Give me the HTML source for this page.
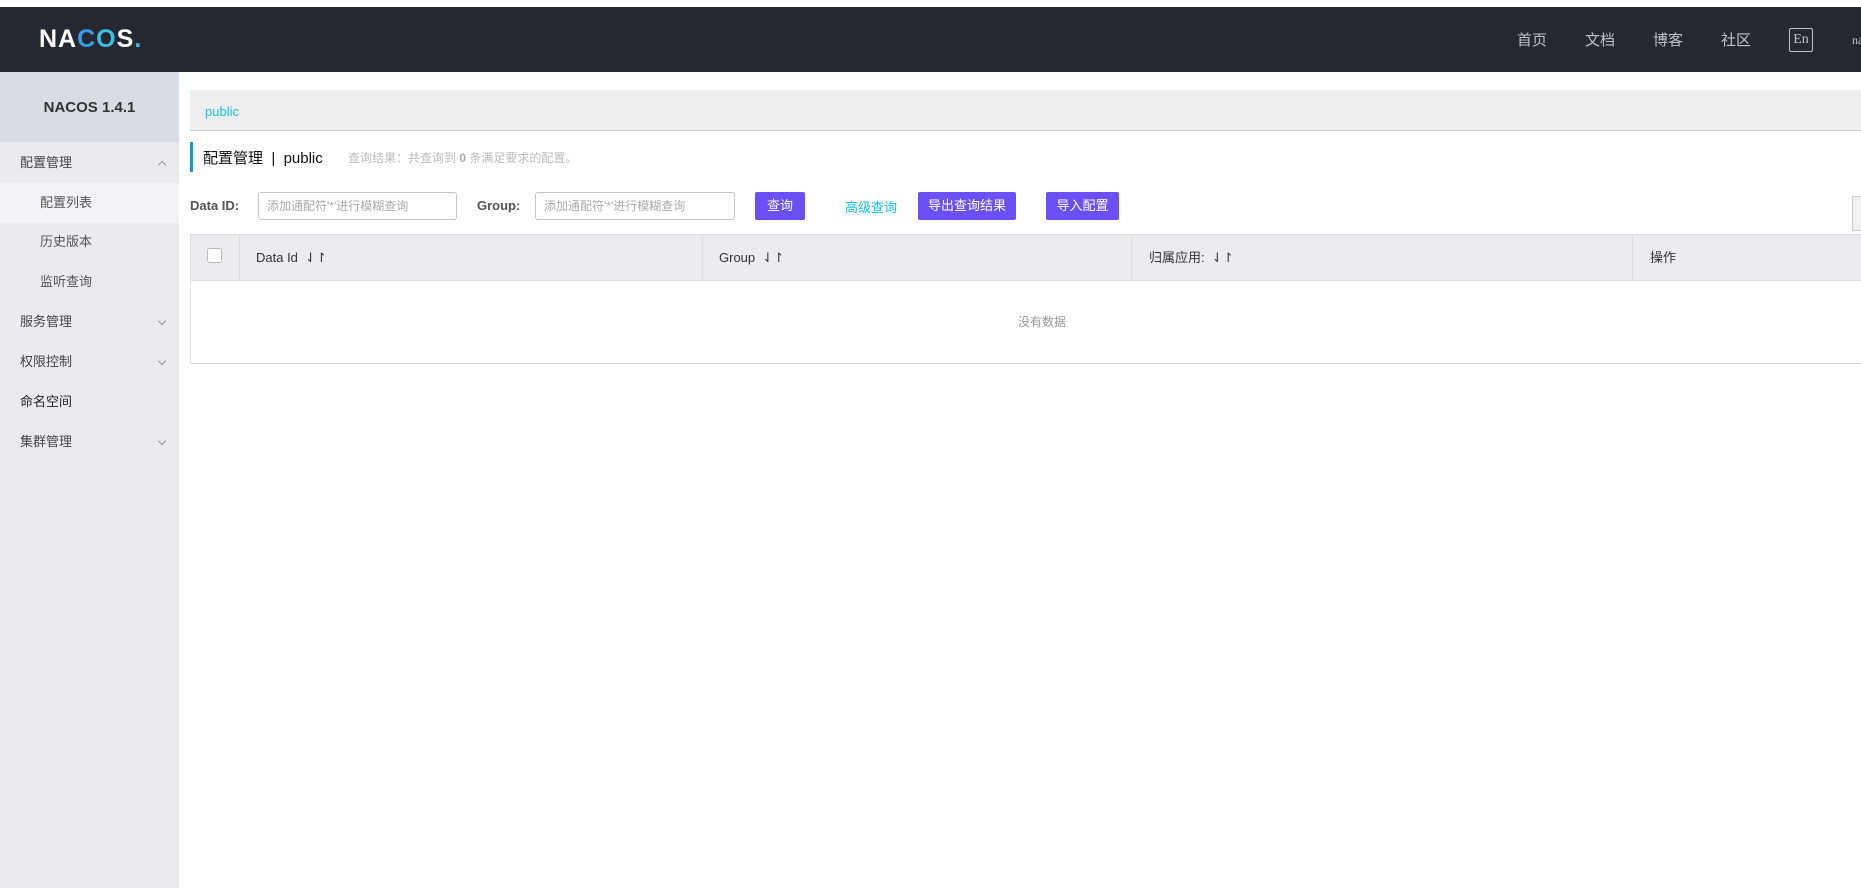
<!DOCTYPE html>
<html><head><meta charset="utf-8"><style>
*{margin:0;padding:0;box-sizing:border-box}
body{width:1861px;height:888px;overflow:hidden;background:#fff;font-family:"Liberation Sans","Noto Sans CJK SC",sans-serif;position:relative;color:#333}
.a{position:absolute;white-space:nowrap}
#hd{left:0;top:7px;width:1861px;height:65px;background:#252830}
.nav{color:#bfc3c9;font-size:15px;top:29px}
#sb{left:0;top:72px;width:179px;height:816px;background:#eaebef}
.mi{left:0;width:179px;height:40px;line-height:40px;font-size:13px;color:#444;padding-left:20px}
.sub{padding-left:40px;color:#555}
.chev{right:14px;top:16px;width:6px;height:6px;border-right:1px solid #999;border-bottom:1px solid #999;transform:rotate(45deg)}
.btn{height:28px;line-height:28px;background:#6c4ff6;color:#fff;font-size:13px;text-align:center;border-radius:2px;top:192px}
.inp{height:28px;border:1px solid #c4c6cf;border-radius:3px;font-size:12px;color:#aaa;line-height:26px;padding-left:8px;top:192px}
.lbl{font-size:13px;font-weight:bold;color:#555;top:198px}
.th{top:234px;height:47px;line-height:47px;font-size:13px;color:#333;border-right:1px solid #dcdee3}
</style></head><body>
<div class="a" id="hd"></div>
<div class="a" style="left:39px;top:25px;font-size:25px;font-weight:bold;color:#fff;letter-spacing:1px">NA<span style="color:#3a9ce6">C</span><span style="color:#3ac0e6">O</span>S<span style="color:#3ac0e6">.</span></div>
<div class="a nav" style="left:1517px">首页</div>
<div class="a nav" style="left:1585px">文档</div>
<div class="a nav" style="left:1653px">博客</div>
<div class="a nav" style="left:1721px">社区</div>
<div class="a" style="left:1789px;top:28px;width:24px;height:24px;border:1px solid #bfc3c9;border-radius:2px;color:#bfc3c9;font-family:'Liberation Serif',serif;font-size:14px;text-align:center;line-height:22px">En</div>
<div class="a" style="left:1852px;top:33px;color:#bfc3c9;font-family:'Liberation Serif',serif;font-size:12px">na</div>

<div class="a" id="sb"></div>
<div class="a" style="left:0;top:72px;width:179px;height:70px;background:#d8dce3;text-align:center;line-height:72px;font-weight:bold;font-size:15px;color:#333">NACOS 1.4.1</div>
<div class="a mi" style="top:143px">配置管理<div class="a chev" style="transform:rotate(225deg);top:19px"></div></div>
<div class="a mi sub" style="top:183px;background:#f2f3f6">配置列表</div>
<div class="a mi sub" style="top:222px">历史版本</div>
<div class="a mi sub" style="top:262px">监听查询</div>
<div class="a mi" style="top:302px">服务管理<div class="a chev"></div></div>
<div class="a mi" style="top:342px">权限控制<div class="a chev"></div></div>
<div class="a mi" style="top:382px;color:#222">命名空间</div>
<div class="a mi" style="top:422px">集群管理<div class="a chev"></div></div>

<div class="a" style="left:190px;top:90px;width:1671px;height:41px;background:#eeeeee;border-bottom:1px solid #ccc"></div>
<div class="a" style="left:205px;top:104px;font-size:13px;color:#17c0e0">public</div>
<div class="a" style="left:190px;top:142px;width:3px;height:30px;background:#1a95d0"></div>
<div class="a" style="left:203px;top:147px;font-size:15px;color:#111">配置管理 &nbsp;| &nbsp;public</div>
<div class="a" style="left:348px;top:149px;font-size:12px;color:#bbb">查询结果：共查询到 <b style="color:#aaa">0</b> 条满足要求的配置。</div>

<div class="a lbl" style="left:190px">Data ID:</div>
<div class="a inp" style="left:258px;width:199px">添加通配符'*'进行模糊查询</div>
<div class="a lbl" style="left:477px">Group:</div>
<div class="a inp" style="left:535px;width:200px">添加通配符'*'进行模糊查询</div>
<div class="a btn" style="left:755px;width:50px">查询</div>
<div class="a" style="left:845px;top:197px;font-size:13px;color:#17c0e0">高级查询</div>
<div class="a btn" style="left:918px;width:98px">导出查询结果</div>
<div class="a btn" style="left:1046px;width:73px">导入配置</div>
<div class="a" style="left:1852px;top:196px;width:12px;height:35px;border:1px solid #ccc;background:#f2f2f2"></div>

<div class="a" style="left:190px;top:234px;width:1680px;height:130px;border:1px solid #dcdee3"></div>
<div class="a" style="left:190px;top:234px;width:1680px;height:47px;background:#ebebf0;border:1px solid #dcdee3"></div>
<div class="a th" style="left:190px;width:50px"><div class="a" style="left:17px;top:14px;width:15px;height:15px;border:1px solid #bbb;border-radius:3px;background:#fff"></div></div>
<div class="a th" style="left:240px;width:463px;padding-left:16px">Data Id &nbsp;⇃↾</div>
<div class="a th" style="left:703px;width:429px;padding-left:16px">Group &nbsp;⇃↾</div>
<div class="a th" style="left:1132px;width:501px;padding-left:17px">归属应用: &nbsp;⇃↾</div>
<div class="a th" style="left:1633px;width:240px;padding-left:17px;border-right:none">操作</div>
<div class="a" style="left:1018px;top:313px;font-size:12px;color:#999">没有数据</div>
</body></html>
